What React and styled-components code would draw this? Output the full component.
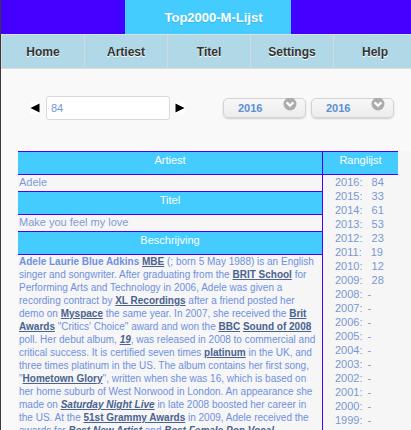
import React from 'react';
import styled, { createGlobalStyle } from 'styled-components';

const GlobalStyle = createGlobalStyle`
  html, body {
    margin: 0;
    padding: 0;
    background: #f9f9f9;
    overflow: hidden;
  }
  body {
    font-family: "Liberation Sans", Arial, Helvetica, sans-serif;
  }
`;

const Page = styled.div`
  border-left: 1px solid #3a3a3a;
  height: 430px;
  overflow: hidden;
  background: #f9f9f9;
`;

const TopBar = styled.header`
  height: 34px;
  background: #4400ff;
  display: flex;
  justify-content: center;
  padding-left: 4px;
`;

const Title = styled.h1`
  margin: 0;
  width: 166px;
  box-sizing: border-box;
  padding-left: 11px;
  background: #44ccff;
  color: #ffffff;
  font-size: 13px;
  font-weight: bold;
  display: flex;
  align-items: center;
  justify-content: center;
  text-shadow: 0 1px 1px rgba(0, 0, 0, 0.12);
`;

const Nav = styled.nav`
  display: flex;
  height: 35px;
  box-sizing: border-box;
  background: #b0d8e6;
  border-top: 1px solid #d6e2e6;
  border-bottom: 1px solid #dcdcdc;
  overflow: hidden;
`;

const NavItem = styled.a`
  flex: 0 0 82px;
  border-left: 1px solid #d2dadd;
  display: flex;
  align-items: center;
  justify-content: center;
  font-size: 12px;
  font-weight: bold;
  color: #333333;
  text-shadow: 0 1px 0 #ffffff;
  text-decoration: none;
`;

const Controls = styled.div`
  display: flex;
  align-items: center;
  height: 24px;
  margin-top: 27px;
  padding-left: 29px;
`;

const ArrowButton = styled.button`
  width: 10px;
  height: 12px;
  padding: 0;
  margin: 0 ${(p) => (p.$side === 'left' ? '6px' : '0')} 0 ${(p) => (p.$side === 'right' ? '5px' : '0')};
  border: none;
  background: #ffffff;
  display: flex;
  align-items: center;
  justify-content: center;
`;

const NumberInput = styled.input`
  box-sizing: border-box;
  width: 124px;
  height: 24px;
  border: 1px solid #d8d8d8;
  border-radius: 3px;
  padding: 0 4px;
  font-family: "Liberation Sans", Arial, Helvetica, sans-serif;
  font-size: 11px;
  color: #6e9ae0;
  background: #ffffff;
  outline: none;
`;

const Selects = styled.div`
  display: flex;
  gap: 5px;
  margin-left: 38px;
`;

const YearSelect = styled.div`
  position: relative;
  box-sizing: border-box;
  width: 83px;
  height: 20px;
  border: 1px solid #d4d4d4;
  border-radius: 5px;
  background: linear-gradient(#f7f7f7, #ececec);
  box-shadow: 0 1px 2px rgba(0, 0, 0, 0.18);
  padding-left: 14px;
  display: flex;
  align-items: center;
  font-size: 11px;
  font-weight: bold;
  color: #5b8fd8;
`;

const Chevron = styled.svg`
  position: absolute;
  top: -1px;
  right: 8px;
`;

const Table = styled.div`
  display: grid;
  grid-template-columns: 304px 76px;
  margin: 31px 0 0 17px;
  background: #f6f6f6;
  height: 300px;
`;

const Column = styled.div`
  display: flex;
  flex-direction: column;
  min-width: 0;
  box-sizing: border-box;
  border-left: ${(p) => (p.$divided ? '1px solid #4400ff' : 'none')};
`;

const Band = styled.div`
  height: 24px;
  box-sizing: border-box;
  border-top: 1px solid #4400ff;
  border-bottom: 1px solid #4400ff;
  background: #44ccff;
  color: #ffffff;
  font-size: 11px;
  line-height: 14px;
  padding-top: 1px;
  text-align: center;
`;

const Field = styled.div`
  height: 16px;
  padding-left: 1px;
  font-size: 11px;
  line-height: 14px;
  color: #7b9bd8;
  white-space: nowrap;
`;

const Description = styled.div`
  padding: 0 2px 0 1px;
  font-size: 10px;
  line-height: 13px;
  color: #6f90e0;
`;

const Strong = styled.b`
  font-weight: bold;
`;

const WikiLink = styled.a`
  font-weight: bold;
  font-style: ${(p) => (p.$italic ? 'italic' : 'normal')};
  color: #4a6290;
  text-decoration: underline;
`;

const RankList = styled.div`
  padding-left: 12px;
  font-size: 11px;
  line-height: 14px;
  color: #7a98d0;
`;

const RankRow = styled.div`
  white-space: nowrap;
`;

const RankValue = styled.span`
  margin-left: ${(p) => (p.$empty ? '5px' : '9px')};
`;

const ranks = [
  ['2016', '84'],
  ['2015', '33'],
  ['2014', '61'],
  ['2013', '53'],
  ['2012', '23'],
  ['2011', '19'],
  ['2010', '12'],
  ['2009', '28'],
  ['2008', '-'],
  ['2007', '-'],
  ['2006', '-'],
  ['2005', '-'],
  ['2004', '-'],
  ['2003', '-'],
  ['2002', '-'],
  ['2001', '-'],
  ['2000', '-'],
  ['1999', '-'],
];

function ChevronIcon() {
  return (
    <Chevron width="14" height="13" viewBox="0 0 14 13">
      <circle cx="7" cy="6" r="6.5" fill="#acacac" />
      <path d="M3.6 4.4 L7 7.8 L10.4 4.4" fill="none" stroke="#ffffff" strokeWidth="2.2" />
    </Chevron>
  );
}

function Triangle({ side }) {
  return (
    <svg width="10" height="12" viewBox="0 0 10 12">
      {side === 'left' ? (
        <polygon points="0.5,6 9.5,1.5 9.5,10.5" fill="#000000" />
      ) : (
        <polygon points="0.5,1.5 9.5,6 0.5,10.5" fill="#000000" />
      )}
    </svg>
  );
}

export default function App() {
  return (
    <>
      <GlobalStyle />
      <Page>
        <TopBar>
          <Title>Top2000-M-Lijst</Title>
        </TopBar>
        <Nav>
          <NavItem>Home</NavItem>
          <NavItem>Artiest</NavItem>
          <NavItem>Titel</NavItem>
          <NavItem>Settings</NavItem>
          <NavItem>Help</NavItem>
        </Nav>
        <Controls>
          <ArrowButton $side="left">
            <Triangle side="left" />
          </ArrowButton>
          <NumberInput defaultValue="84" />
          <ArrowButton $side="right">
            <Triangle side="right" />
          </ArrowButton>
          <Selects>
            <YearSelect>
              2016
              <ChevronIcon />
            </YearSelect>
            <YearSelect>
              2016
              <ChevronIcon />
            </YearSelect>
          </Selects>
        </Controls>
        <Table>
          <Column>
            <Band>Artiest</Band>
            <Field>Adele</Field>
            <Band>Titel</Band>
            <Field>Make you feel my love</Field>
            <Band>Beschrijving</Band>
            <Description>
              <Strong>Adele Laurie Blue Adkins</Strong> <WikiLink>MBE</WikiLink> (; born 5 May 1988) is an
              English singer and songwriter. After graduating from the <WikiLink>BRIT School</WikiLink> for
              Performing Arts and Technology in 2006, Adele was given a recording contract by{' '}
              <WikiLink>XL Recordings</WikiLink> after a friend posted her demo on <WikiLink>Myspace</WikiLink>{' '}
              the same year. In 2007, she received the <WikiLink>Brit Awards</WikiLink> "Critics' Choice" award
              and won the <WikiLink>BBC</WikiLink> <WikiLink>Sound of 2008</WikiLink> poll. Her debut album,{' '}
              <WikiLink $italic>19</WikiLink>, was released in 2008 to commercial and critical success. It is
              certified seven times <WikiLink>platinum</WikiLink> in the UK, and three times platinum in the US.
              The album contains her first song, "<WikiLink>Hometown Glory</WikiLink>", written when she was 16,
              which is based on her home suburb of West Norwood in London. An appearance she made on{' '}
              <WikiLink $italic>Saturday Night Live</WikiLink> in late 2008 boosted her career in the US. At the{' '}
              <WikiLink>51st Grammy Awards</WikiLink> in 2009, Adele received the awards for{' '}
              <WikiLink $italic>Best New Artist</WikiLink> and <WikiLink $italic>Best Female Pop Vocal Performance</WikiLink>.
            </Description>
          </Column>
          <Column $divided>
            <Band>Ranglijst</Band>
            <RankList>
              {ranks.map(([year, value]) => (
                <RankRow key={year}>
                  {year}:<RankValue $empty={value === '-'}>{value}</RankValue>
                </RankRow>
              ))}
            </RankList>
          </Column>
        </Table>
      </Page>
    </>
  );
}
